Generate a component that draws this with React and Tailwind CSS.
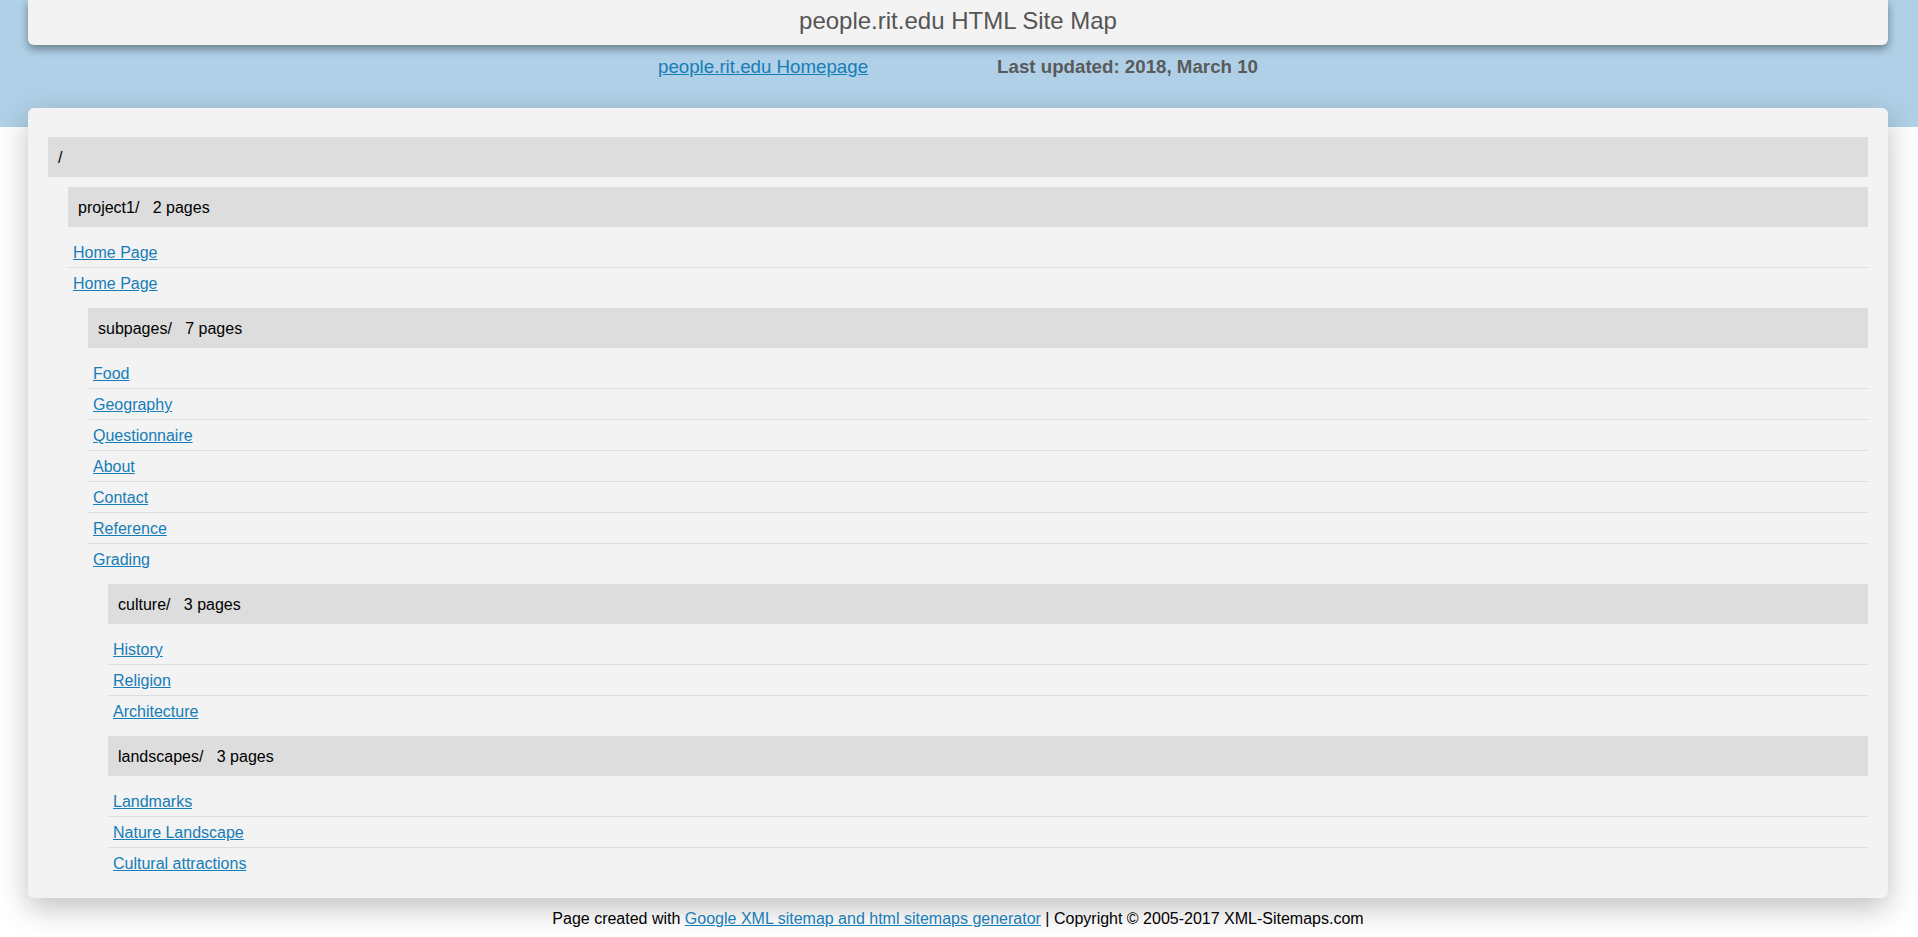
const culture = {
  name: "culture/",
  count: 3,
  links: ["History", "Religion", "Architecture"],
  children: [],
};

const landscapes = {
  name: "landscapes/",
  count: 3,
  links: ["Landmarks", "Nature Landscape", "Cultural attractions"],
  children: [],
};

const subpages = {
  name: "subpages/",
  count: 7,
  links: ["Food", "Geography", "Questionnaire", "About", "Contact", "Reference", "Grading"],
  children: [culture, landscapes],
};

const tree = {
  name: "/",
  count: null,
  links: [],
  children: [
    {
      name: "project1/",
      count: 2,
      links: ["Home Page", "Home Page"],
      children: [subpages],
    },
  ],
};

function Folder({ folder }) {
  return (
    <div className="mt-[10px] first:mt-0">
      <div className="bg-[#dddddd] h-[40px] pl-[10px] pt-[12px] pb-[10px] leading-[18px] text-black">
        {folder.name}
        {folder.count !== null && (
          <span>{"\u00a0\u00a0\u00a0"}{folder.count} pages</span>
        )}
      </div>

      {folder.links.length > 0 && (
        <ul className="mt-[10px]">
          {folder.links.map((link, i) => (
            <li
              key={i}
              className={
                "px-[5px] pt-[7px] pb-[5px] leading-[18px] " +
                (i < folder.links.length - 1 ? "border-b border-[#dddddd]" : "")
              }
            >
              <a href="#" className="text-[#167db7] underline">
                {link}
              </a>
            </li>
          ))}
        </ul>
      )}

      {folder.children.length > 0 && (
        <div className="pl-[20px] mt-[10px]">
          {folder.children.map((child) => (
            <Folder key={child.name} folder={child} />
          ))}
        </div>
      )}
    </div>
  );
}

export default function App() {
  return (
    <div
      className="min-h-screen bg-[linear-gradient(to_bottom,#afd0e7_127px,#ffffff_127px)] text-[16px]"
      style={{ fontFamily: '"Liberation Sans", Arial, sans-serif' }}
    >
      <div className="pl-[28px] pr-[30px]">
        {/* header */}
        <div className="h-[45px] pt-[7px] bg-[#f3f3f3] rounded-b-[6px] shadow-[0_4px_8px_rgba(0,0,0,0.4)] text-center text-[24px] leading-[1.15] text-[#555555]">
          people.rit.edu HTML Site Map
        </div>

        <div className="h-[63px] pt-[11px] flex justify-center gap-[129px] text-[18.72px] leading-[1.15]">
          <a href="#" className="text-[#167db7] underline">
            people.rit.edu Homepage
          </a>
          <span className="font-bold text-[#5a5a5a]">Last updated: 2018, March 10</span>
        </div>

        {/* sitemap */}
        <div className="bg-[#f3f3f3] rounded-[6px] shadow-[0_10px_30px_rgba(0,0,0,0.25)] px-[20px] pt-[29px] pb-[20px]">
          <Folder folder={tree} />
        </div>

        <div className="mt-[12px] text-center leading-[18px] text-black">
          Page created with{" "}
          <a href="#" className="text-[#167db7] underline">
            Google XML sitemap and html sitemaps generator
          </a>{" "}
          | Copyright © 2005-2017 XML-Sitemaps.com
        </div>
      </div>
    </div>
  );
}
